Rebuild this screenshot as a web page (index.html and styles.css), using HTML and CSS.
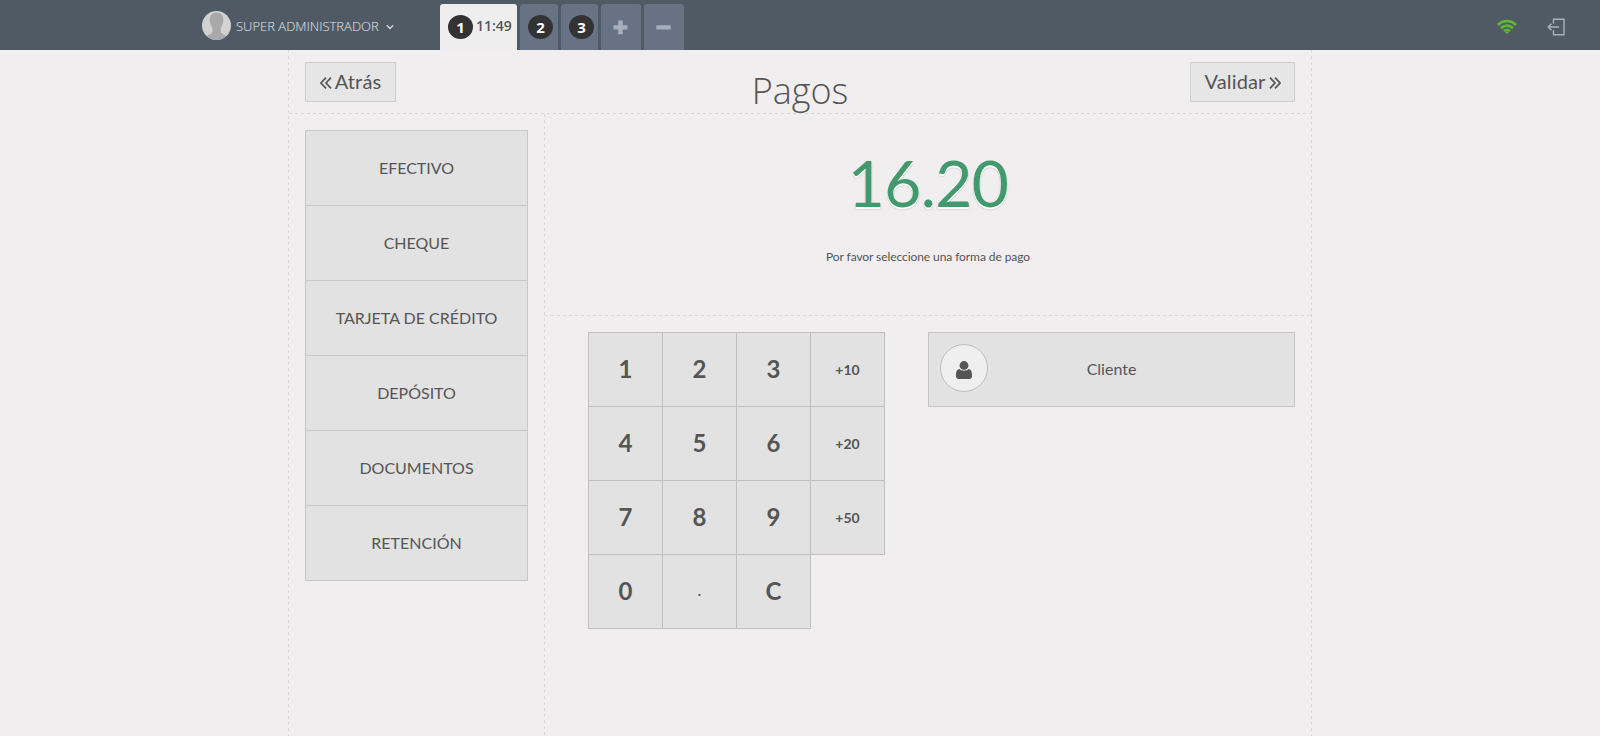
FILE: index.html
```
<!DOCTYPE html>
<html lang="es">
<head>
<meta charset="utf-8">
<title>Pagos</title>
<link rel="stylesheet" href="styles.css">
</head>
<body>
<header class="topbar">
  <div class="user">
    <svg class="avatar" viewBox="0 0 29 29"><defs><clipPath id="disc"><circle cx="14.5" cy="14.5" r="14.5"/></clipPath></defs><g clip-path="url(#disc)"><rect width="29" height="29" fill="#d2d2d2"/><path d="M14.500 1.500C10 1.500 7.600 4.500 7.800 8.500C7.500 9.500 7.800 12 8.800 13C9.200 15 10 16.500 10.500 17.500V20.500C10.300 23 6 23.500 4.500 25.500V29H24.500V25.500C23 23.500 18.900 23 18.700 20.500V17.500C19.200 16.500 20 15 20.300 13C21.300 12 21.600 9.500 21.200 8.500C21.500 4.500 19 1.500 14.500 1.500Z" fill="#a9a9a9"/></g></svg>
    <span class="username">SUPER ADMINISTRADOR</span>
    <svg class="caret" viewBox="0 0 8 6"><path d="M.8 1.200L4 4.400L7.200 1.200" fill="none" stroke="#d5d9dd" stroke-width="1.400"/></svg>
  </div>
  <nav class="orders">
    <div class="tab active"><span class="num">1</span><span class="time">11:49</span></div>
    <div class="tab second"><span class="num">2</span></div>
    <div class="tab third"><span class="num">3</span></div>
    <div class="tab square"><svg viewBox="0 0 15 15"><path d="M5.300 0.500H9.700V5.300H14.500V9.500H9.700V14.300H5.300V9.500H.5V5.300H5.300Z" fill="#a6afbb"/></svg></div>
    <div class="tab square"><svg viewBox="0 0 15 15"><rect x=".2" y="5.200" width="14.600" height="4.300" rx=".8" fill="#a6afbb"/></svg></div>
  </nav>
  <div class="status">
    <svg class="wifi" viewBox="0 0 20 15"><g fill="none" stroke="#5fb832" stroke-width="2.900"><path d="M1 5.900C6 .8 14 .8 19 5.900"/><path d="M4 9.200C7.500 5.800 12.500 5.800 16 9.200"/><path d="M6.900 12.200C8.800 10.400 11.200 10.400 13.100 12.200" stroke-width="2.300"/></g><path d="M8 13.200Q10 11.900 12 13.200L10 15Z" fill="#5fb832"/></svg>
    <svg class="exit" viewBox="0 0 18 18"><path d="M6.500 5.500V1.200H17V16.800H6.500V12.300M12 9H1M4.500 5.800L1.200 9L4.500 12.200" fill="none" stroke="#a9b1bb" stroke-width="1.400"/></svg>
  </div>
</header>
<main class="screen">
  <div class="heading">
    <div class="button back"><svg viewBox="0 0 12 12"><path d="M6 .7L1 6L6 11.300M11 .7L6 6L11 11.300" fill="none" stroke="#555" stroke-width="1.700"/></svg><span>Atrás</span></div>
    <h1>Pagos</h1>
    <div class="button next"><span>Validar</span><svg viewBox="0 0 12 12"><path d="M1 .7L6 6L1 11.300M6 .7L11 6L6 11.300" fill="none" stroke="#555" stroke-width="1.700"/></svg></div>
  </div>
  <div class="columns">
    <aside class="methods">
      <div class="method">EFECTIVO</div>
      <div class="method">CHEQUE</div>
      <div class="method">TARJETA DE CRÉDITO</div>
      <div class="method">DEPÓSITO</div>
      <div class="method">DOCUMENTOS</div>
      <div class="method">RETENCIÓN</div>
    </aside>
    <section class="payment">
      <div class="summary">
        <div class="total">16.20</div>
        <div class="message">Por favor seleccione una forma de pago</div>
      </div>
      <div class="controls">
        <div class="numpad">
          <div class="key">1</div><div class="key">2</div><div class="key">3</div><div class="key small">+10</div>
          <div class="key">4</div><div class="key">5</div><div class="key">6</div><div class="key small">+20</div>
          <div class="key">7</div><div class="key">8</div><div class="key">9</div><div class="key small">+50</div>
          <div class="key">0</div><div class="key dot">.</div><div class="key">C</div>
        </div>
        <div class="client">
          <div class="client-icon"><svg viewBox="0 0 16 18"><circle cx="8" cy="4.500" r="4.400" fill="#555"/><path d="M3.500 8C5.500 10.300 10.500 10.300 12.500 8C15.300 8.300 16 11 16 14.500Q16 18 13 18H3Q0 18 0 14.500C0 11 .7 8.300 3.500 8Z" fill="#555"/></svg></div>
          <span class="client-label">Cliente</span>
        </div>
      </div>
    </section>
  </div>
</main>
</body>
</html>
```
FILE: styles.css
```
:root {
  --dash-x: repeating-linear-gradient(to right, #d8d8d8 0 3px, transparent 3px 6px);
  --dash-y: repeating-linear-gradient(to bottom, #d8d8d8 0 3px, transparent 3px 6px);
}
* { box-sizing: border-box; }
body {
  margin: 0;
  height: 736px;
  overflow: hidden;
  display: flex;
  flex-direction: column;
  background: #f0eeee;
  color: #555;
  font-family: Lato, sans-serif;
}
svg { display: block; flex: none; }
.topbar {
  height: 50px;
  flex: none;
  display: flex;
  background: #4f5a65;
  font-family: "Open Sans", sans-serif;
}
.user { width: 440px; padding: 1px 0 0 202px; display: flex; align-items: center; }
.avatar { width: 29px; height: 29px; }
.username { margin: 0 0 0 5px; width: 144px; font-size: 13px; font-weight: 300; color: #e4e7ea; white-space: nowrap; }
.caret { width: 8px; height: 6px; margin: 2px 0 0 6px; }
.orders { display: flex; gap: 3px; padding-top: 4px; }
.tab {
  height: 46px;
  padding-left: 8px;
  display: flex;
  align-items: center;
  border-radius: 3px 3px 0 0;
  background: #677384;
}
.tab.active { width: 77px; background: #eee; }
.tab.second { width: 38px; }
.tab.third { width: 37px; }
.tab.square { width: 40px; padding: 0; justify-content: center; }
.tab.square svg { width: 15px; height: 15px; margin-right: 1px; }
.num {
  width: 25px;
  height: 24px;
  line-height: 25px;
  border-radius: 50%;
  background: #333;
  color: #fff;
  text-align: center;
  font-size: 15px;
  font-weight: 700;
}
.time { margin-left: 3px; font-size: 14px; font-weight: 600; color: #555; line-height: 20px; padding-bottom: 2px; }
.status { margin-left: auto; padding: 3px 35px 0 0; display: flex; align-items: center; gap: 30px; }
.wifi { width: 20px; height: 15px; }
.exit { width: 18px; height: 18px; }
.screen {
  width: 1024px;
  flex: 1;
  margin: 0 auto;
  padding: 0 1px;
  display: flex;
  flex-direction: column;
  background: var(--dash-y) left / 1px 100% no-repeat, var(--dash-y) right / 1px 100% no-repeat;
}
.heading {
  height: 64px;
  flex: none;
  display: flex;
  justify-content: space-between;
  align-items: flex-start;
  padding: 12px 16px 0;
  background: var(--dash-x) bottom / 100% 1px no-repeat;
}
.heading h1 {
  margin: 4px 0 0 14px;
  font: 300 36px/50px "Open Sans", sans-serif;
  color: #555;
}
.button {
  height: 40px;
  display: flex;
  align-items: center;
  justify-content: center;
  gap: 3px;
  border: 1px solid #cecece;
  background: #e6e6e6;
  font-size: 20px;
  line-height: 36px;
  letter-spacing: .15px;
}
.button.back { width: 91px; }
.button.next { width: 105px; }
.button span { padding-bottom: 2px; }
.button svg { width: 12px; height: 12px; margin-top: 2px; }
.columns { flex: 1; display: flex; }
.methods { width: 255px; flex: none; padding: 16px; }
.method {
  height: 75px;
  border: 1px solid #c8c8c8;
  border-bottom: 0;
  background: #e2e2e2;
  font-size: 16px;
  line-height: 74px;
  text-align: center;
}
.method:last-child { height: 76px; border-bottom: 1px solid #c8c8c8; }
.payment { flex: 1; padding-left: 1px; background: var(--dash-y) left / 1px 100% no-repeat; }
.summary {
  height: 202px;
  padding-top: 30px;
  background: var(--dash-x) bottom / 100% 1px no-repeat;
  text-align: center;
}
.total { font-size: 64px; line-height: 77px; letter-spacing: -.6px; color: #43996e; text-shadow: 0 2px #fff, 0 2px 2px rgba(0, 0, 0, .27); }
.message { margin-top: 27px; font-size: 12px; line-height: 18px; letter-spacing: -.08px; }
.controls { display: flex; justify-content: space-between; align-items: flex-start; padding: 16px 16px 0 43px; }
.numpad { display: grid; grid-template-columns: repeat(4, 74px); grid-auto-rows: 74px; }
.key {
  width: 75px;
  height: 75px;
  border: 1px solid #bfbfbf;
  background: #e2e2e2;
  font-size: 24px;
  font-weight: 700;
  line-height: 71px;
  text-align: center;
}
.key.small { font-size: 14px; line-height: 73px; }
.key.dot { font-size: 14px; }
.client {
  width: 367px;
  height: 75px;
  display: flex;
  align-items: center;
  padding: 0 11px;
  border: 1px solid #c5c5c5;
  background: #e2e2e2;
}
.client-icon {
  width: 48px;
  height: 48px;
  margin-bottom: 3px;
  display: flex;
  align-items: center;
  justify-content: center;
  border: 1px solid #bfbfbf;
  border-radius: 50%;
  background: #efefef;
}
.client-icon svg { width: 16px; height: 18px; margin-top: 4px; }
.client-label { flex: 1; padding: 0 48px 2px 0; text-align: center; font-size: 16px; }
```
